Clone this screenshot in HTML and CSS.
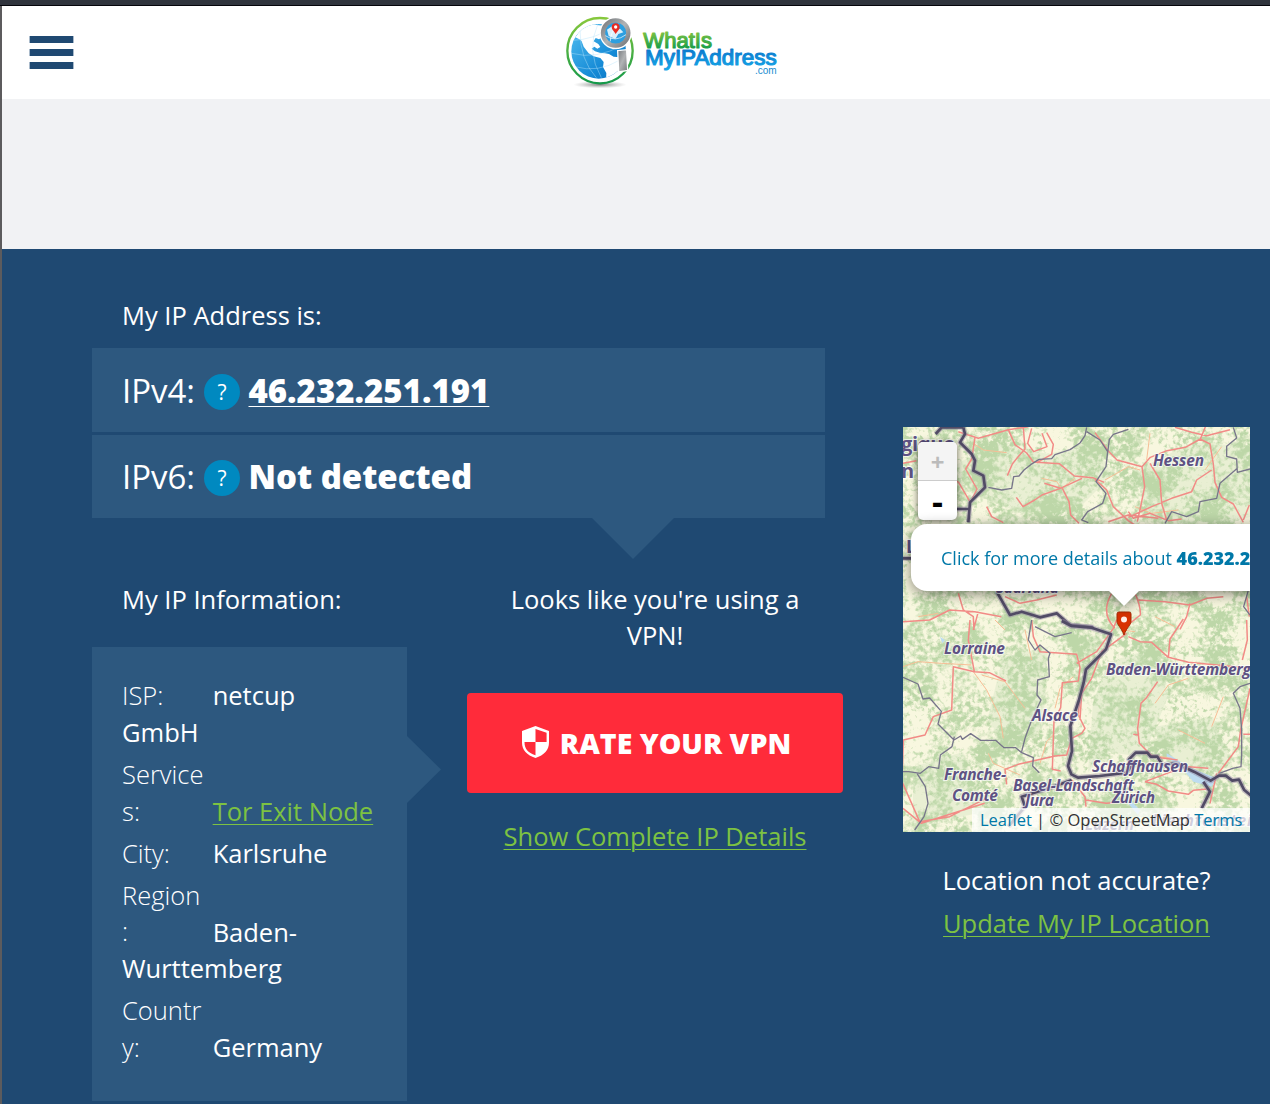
FILE: index.html
```html
<!DOCTYPE html>
<html lang="en">
<head>
<meta charset="utf-8">
<title>What Is My IP Address</title>
<link rel="stylesheet" href="styles.css">
</head>
<body>
<div class="chrome"></div>
<div class="page">
<header class="header">
  <button class="menu" aria-label="Menu"><i></i><i></i><i></i></button>
  <svg class="logo" viewBox="0 0 720 285" role="img">
    <defs>
      <linearGradient id="gr" x1="0" y1="0" x2="0" y2="1"><stop offset="0" stop-color="#86c83c"/><stop offset="1" stop-color="#15994a"/></linearGradient>
      <linearGradient id="gt" gradientUnits="userSpaceOnUse" x1="0" y1="78" x2="0" y2="132"><stop offset="0" stop-color="#83c441"/><stop offset="1" stop-color="#149c4a"/></linearGradient>
      <linearGradient id="bt" gradientUnits="userSpaceOnUse" x1="0" y1="132" x2="0" y2="190"><stop offset="0" stop-color="#0a78cc"/><stop offset="1" stop-color="#16a5e6"/></linearGradient>
      <linearGradient id="sea" x1="0" y1="0" x2="1" y2="1"><stop offset="0" stop-color="#52bef0"/><stop offset=".65" stop-color="#158ad6"/><stop offset="1" stop-color="#0870bd"/></linearGradient>
      <linearGradient id="metal" x1="0" y1="0" x2="1" y2="1"><stop offset="0" stop-color="#777a7d"/><stop offset=".5" stop-color="#b1b3b5"/><stop offset="1" stop-color="#74777a"/></linearGradient>
      <radialGradient id="shade"><stop offset="0" stop-color="#555" stop-opacity=".75"/><stop offset="1" stop-color="#999" stop-opacity="0"/></radialGradient>
      <clipPath id="globe"><circle cx="146" cy="139" r="82"/></clipPath>
    </defs>
    <ellipse cx="150" cy="239" rx="80" ry="11" fill="url(#shade)"/>
    <circle cx="150" cy="137" r="98" fill="#fff" stroke="url(#gr)" stroke-width="7"/>
    <circle cx="146" cy="139" r="82" fill="url(#sea)"/>
    <g clip-path="url(#globe)">
      <path fill="#fff" d="M80 92l14-26 24-14 22 8 20 2-3 19 2 14-12 8-10-4-6 10 14 8 6 9-9 5-9-6-8 6 10 8 14 4 16 2 12 2 14 8 20 2 22 12-12 22-18 14-8 20-17 16-10-8 1-29-10-18 2-15-10-12-20-5-15-9-15-20-6-16-4-5-15-7-4 2z"/>
      <g fill="none" stroke="#b8e3fb" stroke-width="2" opacity=".65"><path d="M65 145Q140 165 218 120M75 185Q143 205 210 165M90 76Q90 165 139 218M144 56Q107 137 154 218M61 107Q136 104 190 65"/></g>
    </g>
    <path d="M203 137l27-3 3 62-27 5z" fill="url(#metal)" stroke="#fff" stroke-width="4"/>
    <circle cx="197" cy="84" r="40" fill="#e1f2fb" stroke="#fff" stroke-width="17"/>
    <circle cx="197" cy="84" r="38" fill="#2c9fe0" stroke="url(#metal)" stroke-width="13"/>
    <path d="M171 74l15-10 9 12 15-5 10 11-15 5-9 15-20-9z" fill="#d9effa"/>
    <path d="M166 92q30 21 62-3M181 109q0-30 25-53" fill="none" stroke="#fff" stroke-width="2"/>
    <path d="M197 87c-4-8-12-12-12-20a12 12 0 0 1 24 0c0 8-8 12-12 20z" fill="#e72b22"/><circle cx="197" cy="66" r="5" fill="#fff"/>
    <g font-family="Liberation Sans,sans-serif" stroke-linejoin="round">
      <text x="280" y="128" font-size="66" textLength="206" lengthAdjust="spacingAndGlyphs" fill="url(#gt)" stroke="url(#gt)" stroke-width="3.500">WhatIs</text>
      <text x="285" y="181" font-size="64" textLength="395" lengthAdjust="spacingAndGlyphs" fill="url(#bt)" stroke="url(#bt)" stroke-width="3.500">MyIPAddress</text>
      <text x="615" y="207" font-size="31" textLength="65" lengthAdjust="spacingAndGlyphs" fill="#168bd0">.com</text>
    </g>
  </svg>
</header>
<div class="ad"></div>
<main class="main">
  <div class="left">
    <h2 class="title">My IP Address is:</h2>
    <div class="ips">
      <div class="ip"><span class="ver">IPv4:</span><span class="help">?</span><a class="addr link">46.232.251.191</a></div>
      <div class="ip ip6"><span class="ver">IPv6:</span><span class="help">?</span><span class="addr">Not detected</span></div>
    </div>
    <div class="cols">
      <section class="info">
        <h2 class="title">My IP Information:</h2>
        <div class="details">
          <p><span>ISP:</span> <b>netcup<br>GmbH</b></p>
          <p><span>Services:</span> <a class="green">Tor Exit Node</a></p>
          <p><span>City:</span> <b>Karlsruhe</b></p>
          <p><span>Region:</span> <b>Baden-Wurttemberg</b></p>
          <p><span>Country:</span> <b>Germany</b></p>
        </div>
      </section>
      <section class="vpn">
        <p class="looks">Looks like you're using a VPN!</p>
        <a class="rate"><svg viewBox="0 0 28 33"><path fill="#fff" fill-rule="evenodd" d="M14 0l14 5v12c0 8-5 13-14 16C5 30 0 25 0 17V5zM14 3v13.500h11.500V7zM14 16.500H2.600c0 7 3.400 11 11.400 13.700z"/></svg>RATE YOUR VPN</a>
        <a class="green">Show Complete IP Details</a>
      </section>
    </div>
  </div>
  <aside class="place">
    <div class="map">
      <svg class="tiles" viewBox="0 0 347 405">
        <defs>
          <filter id="forest" x="0" y="0" width="100%" height="100%" color-interpolation-filters="sRGB">
            <feTurbulence type="fractalNoise" baseFrequency=".03" numOctaves="2" seed="12" result="broad"/>
            <feTurbulence type="fractalNoise" baseFrequency=".2" numOctaves="3" seed="5" result="fine"/>
            <feComposite in="broad" in2="fine" operator="arithmetic" k2=".5" k3=".5"/>
            <feColorMatrix values="0 0 0 0 .74  0 0 0 0 .845  0 0 0 0 .66  6 0 0 0 -2.6"/>
          </filter>
        </defs>
        <rect width="347" height="405" fill="#f8f7df"/>
        <g fill="#d3e4c0" opacity=".4"><path d="M50 40l40-25 55 12 45-10 20 30-30 30-60 10-50-20zM230 45l60-30 57 5v70l-70 20-30-20zM45 110l60-25 50 20-20 60-50-15zM205 235l50-15 10 50-25 60-35-5-20 20 5-70zM100 230l45-10-5 80-35 30-20-40zM10 340l50-15 20 60-70 15zM250 300l60-10 20 50-60 10z"/></g>
        <rect width="347" height="405" filter="url(#forest)"/>
        <g transform="translate(-8 -7) scale(.33333)" fill="none" stroke-linejoin="round">
          <g stroke="#f7be96" stroke-width="3"><path d="M235 70l30 20 70 8M440 175l45 10 15 20 40-30M765 40l-10 80M630 180l70-40 35 10M720 260l50 20 80-10M70 590l60-10M930 150l50-70M300 600l30 30M780 590l60 30"/></g>
          <g stroke="#f28b86" stroke-width="4.500">
            <path d="M24 130l40-8M190 35l60 20 90-26 60-9M240 52l-10 65-18 30 34 60-20 40-35-60-18-10M340 29l20 45 35 25 20 27 78 5 45 37 55 5 35 14M385 22l5 65-18 20-20 25-15 35M410 25l-12 45 18 25 40-15-15-40M455 38l20 35-5 30-45 25M600 38l40 55 26 27 75 20M600 178l35 32 20 50 45 42 30 20M741 140l25-28 50-20 55-10 45-25 15-36M840 22l50 15 45 10 70-18M915 57l30 15 10 60 5 55 20 45 35 20 30 55M950 150l-45 30-15 35-60 20-60 25-70 32M741 140l8 60-12 60-10 45M765 130l30 50 5 70 15 50M448 190l48 15 65-30M496 205l-55 20-22 15-35 20-20-28M502 205l20 40 5 40 25 25M1063 255l-18 45M700 275l15 20 50-15 55 22 40-5M640 305l60-20 90 10M275 260l15 30 35 18"/>
            <path d="M24 605l80-5 60-30 75 5 80 15M190 520l15 50 30 20 2 40M330 530l45 20 50-10 60-15M730 540l80 5 75 10 50-20 50-5M885 550l-10 40-20 38M650 520q-35 60 10 105M718 515q20 45 18 70l-50 40M1055 530l8 60M250 575l-15 55"/>
          </g>
          <g stroke="#77758a" stroke-width="4"><path d="M575 22l-5 25-15 22-30 20-45 15-10 12-38 2-25 16-20 16-15 18-16 2-6 35-30 5-40-8M575 35l40 25 23 35-5 45-30 45 30 35-10 30-45 25-18 25 20 8M700 28l-45 15-12 15-5 40M1015 22l10 32-30 25 0 30 30 8 2 40 38-10M1027 145l-52 45-10 45-50 10-5 30-35 15-45-15-20 35M1063 500l-17 60 19 25"/></g>
          <g stroke="#9185a0" stroke-width="15" opacity=".5"><path d="M205 22l5 20-15 25 35 35 10 20-5 30 30 15 5 35-45 45-5 60M205 22h-65l-18 20M24 415h40M185 267h37M305 515l40 70 35-10 55 17 50-12 40 35 70 7"/></g>
          <g stroke="#514b65" stroke-width="8"><path d="M205 22l5 20-15 25 35 35 10 20-5 30 30 15 5 35-45 45-5 60M205 22h-65l-18 20M24 415h40M185 267h37M305 515l40 70 35-10 55 17 50-12 40 35 70 7"/></g>
        </g>
        <g transform="translate(-8 193) scale(.33333)" fill="none" stroke-linejoin="round">
          <path d="M815 400l75 45 75 30-15 25-55-15-25-30-55-45zM135 50l15 10-8 10zM700 535l35 35-6 15-30-35z" fill="#bddcf1"/>
          <g stroke="#f7be96" stroke-width="3"><path d="M24 140l45-15 70 5 90 5M235 155l40 55 40 80 10 65M260 165l70 20 60 80M390 30l20 90M280 400l15 30 80 35M435 430l20-65 20-20M780 250l40-55 60-20M850 330l80 40M535 170l-40 35-15 60M985 230l-35 90M680 30l40 5M740 400l90 15"/></g>
          <g stroke="#f28b86" stroke-width="4.500"><path d="M225 0l-5 60 18 95-63-15-5 130-55 20-25 55-65 15-4 125 53 120 90-15 110-55M238 155l45 3 50 25M410 0l5 50 20 45 110 8 10 40-5 40-48 5-5 75-20 40-5 145 25 5M545 130l60-35 50-70 10-25M700 50l35 15 35 2 50 45 60 15 155 15 28 5M820 112l5-55 40-60M555 300l5-80 30-45 30-80 75-55M555 225l-5 60 20 40-10 15-30 15-15 50-35 3-110 25-40 15 5 45M788 185l-35 50-15 15-10 75 5 45 40 40 75 10M730 345l-15-2M1055 0l2 60-15 60M1065 205l-28 125-7 50-60 80M1045 343h20M24 565l55 45 190-60M530 480l40 50 3 30M573 540l60 10 60-5M750 485l80-30 50-15 60 5M750 485l35 8 35 20 60 10 15-12 50-5M965 460l-20 90"/></g>
          <g stroke="#77758a" stroke-width="4"><path d="M24 172l45 20 15 45 20-3 35 40-10 38 48 48 20-12 5 10 25-17 30 20 45 0 25 22 35 0 18 15 35 15-2 25 20 20M178 350l-7 30-35 25-5 40-30-5-25 20-35-5-17 0M66 460l25 40 8 50-12 40-28 40M380 395l10-40 20-55 28-60-12-15 2-45 35-10-3-55 5-15-30-25-15 15-20-30 10-60M420 20l60 30 50-12M1065 190l-30 10-20 20 20 45 5 65 0 75-2 35-25 5-40 15"/></g>
          <path d="M500 3l30 15 60 5 58 20-15 45-60 60-7 40-15 55-25 75 5 75-12 45 10 25 20 10 65-5 80-10 20-25-12-15 20-20 35 0 10 12 20 0 15 25 40-5 55 25 50 27 25-15 20 0 20 15 20-3 15 30 35 30M925 485l20 30-25 50M530 480l-55 20-95 30 10 30-50 60" stroke="#9185a0" stroke-width="16" opacity=".5"/>
          <path d="M500 3l30 15 60 5 58 20-15 45-60 60-7 40-15 55-25 75 5 75-12 45 10 25 20 10 65-5 80-10 20-25-12-15 20-20 35 0 10 12 20 0 15 25 40-5 55 25 50 27 25-15 20 0 20 15 20-3 15 30 35 30M925 485l20 30-25 50M530 480l-55 20-95 30 10 30-50 60" stroke="#514b65" stroke-width="8"/>
        </g>
        <g class="labels">
          <text x="-2" y="24" font-size="20" textLength="54">gique</text><text x="-2" y="51" font-size="20">n</text><text x="3" y="126" font-size="18">L</text>
          <g font-style="italic">
            <text x="250" y="39" textLength="51">Hessen</text><text x="93" y="166" textLength="63">Saarland</text><text x="41" y="227" textLength="61">Lorraine</text><text x="203" y="248" textLength="145">Baden-Württemberg</text><text x="129" y="294" textLength="46">Alsace</text><text x="189" y="345" textLength="96">Schaffhausen</text><text x="41" y="353" textLength="62">Franche-</text><text x="49" y="374" textLength="46">Comté</text><text x="110" y="364" textLength="121">Basel-Landschaft</text><text x="122" y="379" textLength="29">Jura</text><text x="209" y="376" textLength="43">Zürich</text><text x="182" y="403" textLength="49">Luzern</text><text x="249" y="399" textLength="110">Liechtenstein</text>
          </g>
        </g>
      </svg>
      <svg class="pin" viewBox="0 0 16 26"><path d="M1 3Q1 1 3 1h10q2 0 2 2v7c0 4-4 6-7 14C5 16 1 14 1 10z" fill="#d83203" stroke="#a82a05"/><circle cx="8" cy="8.500" r="3" fill="#fff0eb"/></svg>
      <div class="zoom"><span class="plus">+</span><span class="minus">-</span></div>
      <div class="popup">Click for more details about <b>46.232.251.191</b></div>
      <div class="credit"><a>Leaflet</a> | © OpenStreetMap <a>Terms</a></div>
    </div>
    <p class="accurate">Location not accurate?</p>
    <a class="green">Update My IP Location</a>
  </aside>
</main>
</div>
</body>
</html>
```
FILE: styles.css
```css
* { box-sizing: border-box; }
body { margin: 0; height: 1104px; overflow: hidden; font: 25.500px/36px "Open Sans", sans-serif; color: #fff; }
p, h2 { margin: 0; font-size: inherit; font-weight: 400; }
.chrome { height: 6px; background: #30343d; border-bottom: 1px solid #05050b; }
.page { border-left: 2px solid #5c5b5d; }
.header { display: flex; height: 93px; background: #fff; padding-left: 27px; }
.menu { display: flex; flex-direction: column; justify-content: space-between; width: 45px; height: 33px; margin: 30px 0 0; padding: 0; border: 0; background: none; }
.menu i { height: 7px; width: 45px; background: #1f4972; border: solid #a9bacb; border-width: 0 1px; }
.logo { width: 240px; height: 95px; margin: -1px 0 0 476px; flex: none; }
.ad { height: 150px; background: #f1f2f4; }
.main { display: flex; height: 855px; padding: 48px 20px 0 90px; background: #1f4972; }
.left { width: 751px; }
.title { padding-left: 30px; height: 51px; }
.ips { position: relative; width: 733px; display: flex; flex-direction: column; gap: 3px; }
.ips::after { content: ""; position: absolute; left: 500px; top: 170px; width: 82px; height: 41px; background: #2d587f; clip-path: polygon(0 0, 100% 0, 50% 100%); }
.ip { display: flex; align-items: center; height: 84px; padding: 1px 0 0 30px; background: #2d587f; font-size: 32.950px; line-height: 46px; }
.ip6 { height: 83px; padding-top: 0; }
.ver { width: 82px; font-weight: 400; }
.help { width: 36px; height: 36px; margin: 2px 8.500px 0 0; border-radius: 50%; background: #0089c0; font-size: 21px; line-height: 36px; text-align: center; }
.addr { font-weight: 800; }
.link { text-decoration: underline; text-decoration-thickness: 1px; text-underline-offset: 3px; }
.cols { display: flex; gap: 60px; padding-top: 63px; }
.info { width: 315px; }
.info .title { height: 66px; }
.details { position: relative; height: 454px; padding: 30px; background: #2d587f; line-height: 36.800px; }
.details::after { content: ""; position: absolute; left: 315px; top: 89px; width: 34px; height: 67px; background: #2d587f; clip-path: polygon(0 0, 100% 50%, 0 100%); }
.details p { margin-bottom: 5.200px; }
.details span { display: inline-block; width: 84px; font-weight: 300; overflow-wrap: anywhere; }
.details b { font-weight: 400; }
.green { color: #7dc242; text-decoration: underline; text-decoration-thickness: 1px; text-underline-offset: 3px; }
.vpn { width: 376px; text-align: center; }
.looks { padding: 0 40px; height: 112px; }
.rate { display: flex; align-items: center; justify-content: center; gap: 11px; height: 100px; margin-bottom: 25px; padding-left: 3px; border-radius: 4px; background: #ff2b3a; font-size: 28.500px; font-weight: 800; }
.rate svg { width: 27px; height: 32px; margin-top: -3px; }
.place { width: 347px; margin: 130px 0 0 60px; text-align: center; }
.map { position: relative; height: 405px; overflow: hidden; margin-bottom: 30px; }
.tiles { display: block; width: 347px; height: 405px; }
.labels { font-family: "Open Sans", sans-serif; font-size: 15.500px; font-weight: 700; fill: #5e5283; stroke: #ffffffb0; stroke-width: 2px; paint-order: stroke; }
.pin { position: absolute; left: 213px; top: 184px; width: 16px; height: 26px; }
.zoom { position: absolute; left: 15px; top: 15px; width: 39px; height: 78px; border-radius: 5px; overflow: hidden; background: #fff; box-shadow: 0 1px 7px #0009; font-weight: 700; }
.zoom span { display: block; height: 39px; }
.plus { background: #f4f4f4; border-bottom: 1px solid #ccc; color: #bbb; font-size: 24px; line-height: 40px; }
.minus { color: #000; font-size: 34px; line-height: 41px; }
.popup { position: absolute; left: 8px; top: 97px; width: 426px; height: 67px; padding-left: 30px; border-radius: 16px; background: #fff; color: #0078a8; font-size: 18px; line-height: 69px; text-align: left; white-space: nowrap; filter: drop-shadow(0 3px 7px #0007); }
.popup::after { content: ""; position: absolute; left: 197px; top: 66px; width: 32px; height: 16px; background: #fff; clip-path: polygon(0 0, 100% 0, 50% 100%); }
.popup b { font-weight: 800; }
.credit { position: absolute; right: 0; bottom: 0; width: 278px; height: 24px; padding-right: 7.500px; background: #ffffffb8; color: #333; font-size: 16.500px; line-height: 24px; text-align: right; white-space: nowrap; }
.credit a { color: #0078a8; }
.accurate { margin-bottom: 7px; }
```
